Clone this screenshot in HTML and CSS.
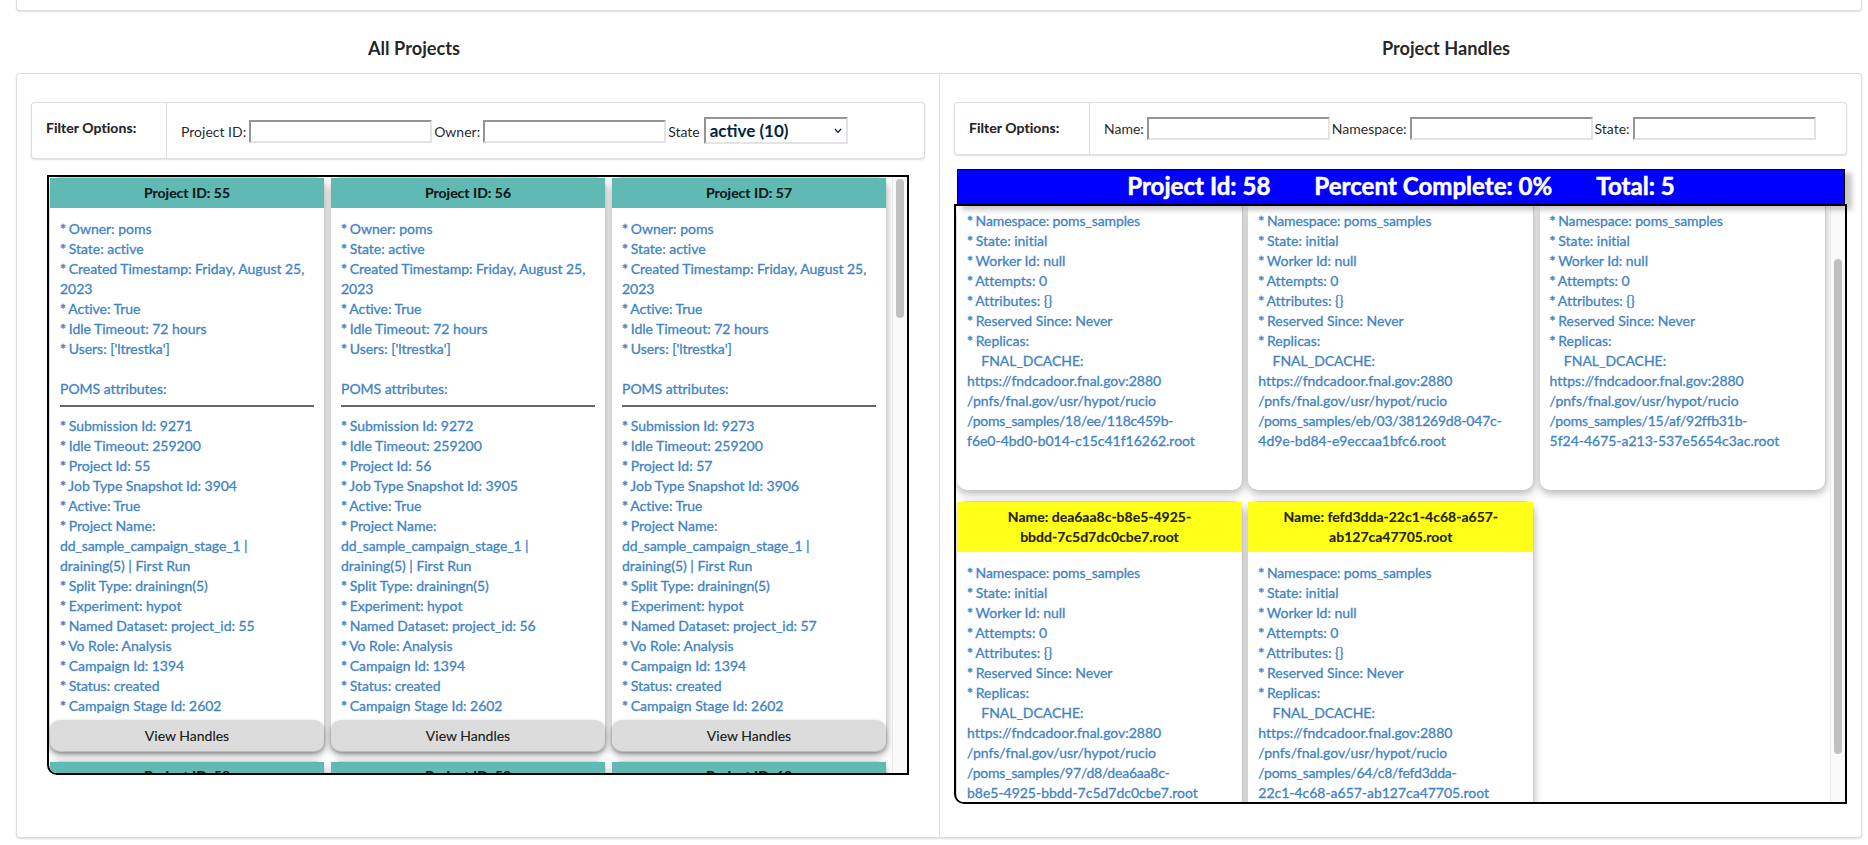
FILE: index.html
```html
<!DOCTYPE html>
<html lang="en">
<head>
<meta charset="utf-8">
<title>Projects</title>
<link rel="stylesheet" href="styles.css">
</head>
<body>
<div class="segment previous"></div>
<div class="titles"><h3>All Projects</h3><h3>Project Handles</h3></div>
<main class="segment main">
  <section class="column">
    <div class="filters filters-projects">
      <strong>Filter Options:</strong>
      <form><label>Project ID:</label><input type="text"><label>Owner:</label><input type="text"><label>State</label><span class="select">active (10)<svg width="8" height="6" viewBox="0 0 8 6"><path d="M1 1l3 3.4L7 1" fill="none" stroke="#001b33" stroke-width="1.2"/></svg></span></form>
    </div>
    <div class="box projects">
      <div class="cards" id="projects"></div>
      <div class="track"><div class="thumb"></div></div>
    </div>
  </section>
  <section class="column">
    <div class="filters filters-handles">
      <strong>Filter Options:</strong>
      <form><label>Name:</label><input type="text"><label>Namespace:</label><input type="text"><label>State:</label><input type="text"></form>
    </div>
    <div class="summary"><span>Project Id: 58</span><span>Percent Complete: 0%</span><span>Total: 5</span></div>
    <div class="box handles">
      <div class="cards" id="handles"></div>
      <div class="track"><div class="thumb"></div></div>
    </div>
  </section>
</main>
<script src="script.js"></script>
</body>
</html>
```
FILE: script.js
```js
const line = (text) => {
  const kind = text.startsWith("/poms") ? " path" : text.includes("_sample") ? " snake" : "";
  return `<div class="line${kind}">${text.replace(/^\* /, '<b class="star">*</b> ')}</div>`;
};
const lines = (items) => items.map(line).join("");

const projects = [[55, 9271, 3904], [56, 9272, 3905], [57, 9273, 3906]];
const upcoming = [58, 59, 60];

document.getElementById("projects").innerHTML =
  projects.map(([id, submission, snapshot]) => `
  <article class="card project">
    <header>Project ID: ${id}</header>
    <div class="body">${lines([
      "* Owner: poms", "* State: active",
      "* Created Timestamp: Friday, August 25, 2023",
      "* Active: True", "* Idle Timeout: 72 hours", "* Users: ['ltrestka']",
      "&nbsp;", "POMS attributes:",
    ])}<hr>${lines([
      `* Submission Id: ${submission}`, "* Idle Timeout: 259200",
      `* Project Id: ${id}`, `* Job Type Snapshot Id: ${snapshot}`,
      "* Active: True", "* Project Name:",
      "dd_sample_campaign_stage_1 |", "draining(5) | First Run",
      "* Split Type: drainingn(5)", "* Experiment: hypot",
      `* Named Dataset: project_id: ${id}`, "* Vo Role: Analysis",
      "* Campaign Id: 1394", "* Status: created", "* Campaign Stage Id: 2602",
      "* Campaign Stage Snapshot Id: 3380",
    ])}</div>
    <button type="button">View Handles</button>
  </article>`).join("") +
  upcoming.map((id) => `
  <article class="card project upcoming"><header>Project ID: ${id}</header></article>`).join("");

const handles = [
  ["", "18/ee/118c459b-", "f6e0-4bd0-b014-c15c41f16262.root"],
  ["", "eb/03/381269d8-047c-", "4d9e-bd84-e9eccaa1bfc6.root"],
  ["", "15/af/92ffb31b-", "5f24-4675-a213-537e5654c3ac.root"],
  ["Name: dea6aa8c-b8e5-4925-<br>bbdd-7c5d7dc0cbe7.root", "97/d8/dea6aa8c-", "b8e5-4925-bbdd-7c5d7dc0cbe7.root"],
  ["Name: fefd3dda-22c1-4c68-a657-<br>ab127ca47705.root", "64/c8/fefd3dda-", "22c1-4c68-a657-ab127ca47705.root"],
];

document.getElementById("handles").innerHTML = handles.map(([name, path, file]) => `
  <article class="card handle${name ? "" : " scrolled"}">
    ${name ? `<header>${name}</header>` : ""}
    <div class="body">${lines([
      "* Namespace: poms_samples", "* State: initial", "* Worker Id: null",
      "* Attempts: 0", "* Attributes: {}", "* Reserved Since: Never", "* Replicas:",
      "&nbsp;&nbsp;&nbsp; FNAL_DCACHE:", "https://fndcadoor.fnal.gov:2880",
      "/pnfs/fnal.gov/usr/hypot/rucio", `/poms_samples/${path}`, file,
    ])}</div>
  </article>`).join("");
```
FILE: styles.css
```css
* { box-sizing: border-box; }
body {
  margin: 0;
  height: 845px;
  overflow: hidden;
  background: #fff;
  color: rgba(0, 0, 0, .87);
  font: 14px/20px Lato, sans-serif;
}
.segment, .filters {
  background: #fff;
  border: 1px solid rgba(34, 36, 38, .15);
  border-radius: 4px;
  box-shadow: 0 1px 2px 0 rgba(34, 36, 38, .15);
}
.segment { margin: 0 6px 0 16px; }
.previous { height: 11px; border-top: 0; border-radius: 0 0 4px 4px; }
.titles { display: flex; height: 62px; padding-top: 26px; }
h3 { margin: 0; width: 828px; font-size: 18.2px; line-height: 23px; text-align: center; }
h3 + h3 { margin-left: 204px; }
.main { display: grid; grid-template-columns: 922px 922px; height: 765px; }
.column { padding: 28px 14px 0; }
.column + .column { border-left: 1px solid rgba(34, 36, 38, .15); }
.filters { display: grid; grid-template-columns: 135px 1fr; }
.filters-projects { height: 57px; width: 894px; }
.filters-handles { height: 53px; width: 893px; }
.filters strong {
  padding: 15px 0 0 14px;
  border-right: 1px solid rgba(34, 36, 38, .15);
  letter-spacing: .06px;
  -webkit-text-stroke: .2px;
}
.filters form { display: flex; align-items: flex-start; padding: 14px 0 0 14px; }
.filters-projects form > * { margin-top: 3px; }
.filters label { line-height: 23px; white-space: nowrap; }
.filters input {
  width: 183px;
  height: 23px;
  margin-left: 3px;
  margin-right: 2px;
  border: 2px solid;
  border-color: #949494 #e3e3e3 #e3e3e3 #949494;
  border-radius: 0;
  padding: 0;
}
.filters-projects form .select {
  display: flex;
  justify-content: space-between;
  align-items: center;
  width: 144px;
  height: 27px;
  margin: 0 0 0 4px;
  padding: 0 4px;
  border: 2px solid;
  border-color: #949494 #e3e3e3 #e3e3e3 #949494;
  color: #00263f;
  font-size: 17px;
  font-weight: bold;
}
.box { display: flex; overflow: hidden; border: 2px solid #000; }
.projects { width: 862px; height: 600px; margin: 16px 0 0 16px; border-radius: 0 0 0 10px; }
.handles { width: 893px; height: 600px; border-radius: 0 0 0 10px; }
.cards { flex: none; display: grid; align-content: start; padding-left: 1px; }
.projects .cards { grid-template-columns: repeat(3, 275px); column-gap: 6px; row-gap: 9px; width: 843px; }
.handles .cards { grid-template-columns: repeat(3, 286px); column-gap: 5.3px; row-gap: 11px; width: 874px; }
.card {
  border: 1px solid #d0d0d0;
  border-width: 1px 1px 0 0;
  border-radius: 10px;
  background: #fff;
  box-shadow: 0 4px 8px 0 rgba(0, 0, 0, .2), 0 2px 8px 0 rgba(0, 0, 0, .12);
}
.card header { text-align: center; font-weight: bold; -webkit-text-stroke: .2px; }
.project { height: 575px; }
.project header { height: 30px; padding-top: 5px; background: #61b9b4; }
.upcoming header { padding-top: 4px; }
.body { padding: 11px 10px 0 10px; color: #4183c4; -webkit-text-stroke: .3px; }
.project .body { height: 512px; overflow: hidden; }
.line { letter-spacing: -.02px; }
.line.snake { letter-spacing: -.12px; }
.line.path { letter-spacing: -.22px; }
.star { letter-spacing: -.8px; }
.body hr { margin: 6px 0 9px; border: 0; border-top: 2px solid #666; }
.project button {
  display: block;
  width: 100%;
  height: 31px;
  border: 0;
  border-radius: 10px;
  background: #dcdcdc;
  box-shadow: 0 2px 4px rgba(0, 0, 0, .35);
  font: inherit;
  color: rgba(0, 0, 0, .87);
  -webkit-text-stroke: .2px;
}
.handle { height: 360px; }
.handle.scrolled { height: 284px; border-top: 0; border-radius: 0 0 10px 10px; }
.handle.scrolled .body { padding-top: 5px; }
.handle header { height: 50px; padding-top: 5px; background: #ffff17; }
.track { flex: 1; border-left: 1px solid #e8e8e8; background: #fafafa; padding-left: 3px; }
.thumb { width: 8px; border-radius: 4px; background: #c1c1c1; }
.projects .thumb { height: 139px; margin-top: 2px; }
.handles .thumb { height: 495px; margin-top: 53px; }
.summary {
  position: relative;
  display: flex;
  justify-content: center;
  gap: 44px;
  width: 888px;
  height: 35px;
  margin: 14px 0 0 3px;
  border: 1px solid #000;
  border-bottom: 0;
  background: #00f;
  color: #fff;
  font-size: 24.1px;
  font-weight: bold;
  line-height: 32px;
  -webkit-text-stroke: .5px;
  box-shadow: 6px 5px 5px 1px rgba(0, 0, 0, .22);
}
```
